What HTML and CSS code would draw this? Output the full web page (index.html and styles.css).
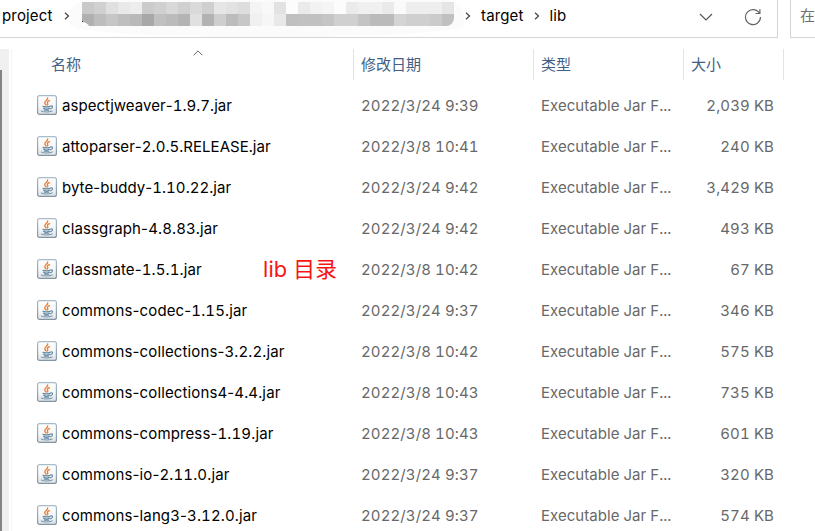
FILE: index.html
```
<!DOCTYPE html>
<html lang="zh-CN">
<head>
<meta charset="utf-8">
<title>lib</title>
<link rel="stylesheet" href="styles.css">
</head>
<body>
<svg class="defs" width="0" height="0" aria-hidden="true">
  <defs>
    <linearGradient id="tile" x1="0" y1="0" x2="0" y2="1"><stop offset="0" stop-color="#fff"/><stop offset=".55" stop-color="#f6f7f8"/><stop offset="1" stop-color="#dce1e5"/></linearGradient>
    <linearGradient id="edge" x1="0" y1="0" x2="0" y2="1"><stop offset="0" stop-color="#a9bac8"/><stop offset="1" stop-color="#8394a3"/></linearGradient>
    <symbol id="jar" viewBox="0 0 20 20">
      <rect x=".6" y=".6" width="18.8" height="18.8" rx="2" fill="url(#tile)" stroke="url(#edge)" stroke-width="1.2"/>
      <g fill="none" stroke-linecap="round">
        <path d="M10.7 3C11.1 5.3 7.2 5.9 7.8 8.1C8 9 9 9.4 9 10.1M12.6 5.6C10.8 6.2 9.8 7.2 10.6 8.3C11 9 10.8 9.6 10.2 10" stroke="#ec8038" stroke-width="1.35"/>
        <path d="M6 11.4C7.6 12.1 11.6 12 13 11.4M6.5 13.3C8 14 11 14 12.3 13.3M7.3 15.1H11.8M13.5 11C16.6 10.4 15.8 13.3 13.3 13.8" stroke="#668ba5" stroke-width="1.15"/>
        <path d="M4.3 16.1C6.4 17.4 13 17.3 15.3 16" stroke="#7292a8" stroke-width="1"/>
      </g>
    </symbol>
  </defs>
</svg>
<header class="top">
  <div class="address">
    <span class="crumb project">project</span>
    <svg class="sep" viewBox="0 0 6 8"><path d="M1 .8L4.5 4L1 7.2"/></svg>
    <div class="redacted"><div class="mosaic" id="mosaic"></div></div>
    <svg class="sep second" viewBox="0 0 6 8"><path d="M1 .8L4.5 4L1 7.2"/></svg>
    <span class="crumb target">target</span>
    <svg class="sep third" viewBox="0 0 6 8"><path d="M1 .8L4.5 4L1 7.2"/></svg>
    <span class="crumb lib">lib</span>
    <svg class="drop" viewBox="0 0 14 8"><path d="M1 1L7 7L13 1"/></svg>
    <svg class="reload" viewBox="0 0 18 18"><path d="M15.7 5.7A7.5 7.5 0 1 0 16.5 9M15.9 1.3V5.5H11.6"/></svg>
  </div>
  <div class="search">在</div>
</header>
<main class="content">
  <aside class="gutter"><div class="thumb"></div></aside>
  <section class="files">
    <div class="row head">
      <div class="cell">名称<svg class="sort" viewBox="0 0 10 6"><path d="M.7 5.2L5 .9L9.3 5.2"/></svg></div>
      <div class="cell">修改日期</div>
      <div class="cell">类型</div>
      <div class="cell">大小</div>
    </div>
    <div id="rows"></div>
  </section>
</main>
<script src="script.js"></script>
</body>
</html>
```
FILE: styles.css
```
* { box-sizing: border-box; }
body { margin: 0; width: 815px; height: 531px; overflow: hidden; background: #fff; color: #000; font: 15px/20px Inter, "Noto Sans CJK SC", sans-serif; font-variant-numeric: tabular-nums; }
svg { display: block; flex: none; fill: none; }
.defs { position: absolute; }
.top { display: flex; height: 38px; justify-content: space-between; }
.address { display: flex; width: 778px; height: 38px; padding: 0 0 6px 2px; align-items: center; border: solid #d5d5d5; border-width: 0 1px 1px 0; }
.crumb { white-space: nowrap; flex: none; letter-spacing: .15px; }
.project { width: 52px; }
.target { width: 43px; margin-left: 10px; }
.lib { width: 18px; margin-left: 10px; }
.sep { width: 6px; height: 8px; margin-left: 9.5px; stroke: #444; stroke-width: 1.2; }
.second { margin-left: 1px; }
.redacted { width: 394.5px; height: 37px; margin: 5px 0 0 0; padding: 2px 10px 0 12.5px; background: #fbfbfb; border-radius: 20px 20px 48% 48% / 15px 15px 12px 12px; }
.mosaic { position: relative; display: grid; width: 372px; height: 24px; grid-template-columns: repeat(31, 12px); grid-template-rows: 12px 12px; overflow: hidden; border-radius: 0 0 8px 0; }
.mosaic::after { content: ""; position: absolute; left: -8px; bottom: -12px; width: 16px; height: 16px; border-radius: 50%; background: #fdfdfd; }
.mosaic::before { content: ""; position: absolute; left: 0; bottom: 4px; width: 1px; height: 1px; background: #333; z-index: 1; }
.drop { width: 14px; height: 8px; margin: 2px 0 0 131px; stroke: #555; stroke-width: 1.2; }
.reload { width: 18px; height: 18px; margin: 2px 0 0 31px; stroke: #666; stroke-width: 1.2; }
.search { width: 25px; height: 38px; padding: 6px 0 0 9px; overflow: hidden; color: #707070; border: solid #d5d5d5; border-width: 0 0 1px 1px; }
.content { display: flex; padding-top: 11px; height: 493px; }
.gutter { width: 9px; height: 482px; padding-top: 21px; background: #f0f0f0; }
.thumb { width: 2px; height: 461px; background: #858585; }
.files { width: 773px; margin-left: 2px; border-left: 1px solid #f5f5f5; }
.row { display: grid; grid-template-columns: 342px 180px 150px 100px; height: 41px; align-items: center; color: #686868; }
.head { height: 31px; margin-bottom: 5px; color: #426084; }
.head .cell { position: relative; height: 31px; padding: 6px 0 0 7px; border-right: 1px solid #e3e3e3; }
.head .cell:first-child { padding-left: 39px; }
.sort { position: absolute; left: 181px; top: 1px; width: 10px; height: 6px; stroke: #666; }
.name { position: relative; display: flex; align-items: center; padding-left: 25px; gap: 5px; color: #000; letter-spacing: .04px; }
.name.wide { letter-spacing: .13px; }
.name svg { width: 20px; height: 20px; margin-top: -1px; }
.dash { font-variant-numeric: normal; }
.date { padding-left: 7px; letter-spacing: .1px; }
.type { padding-left: 7px; letter-spacing: .04px; }
.size { text-align: right; padding-right: 10px; letter-spacing: .1px; }
.note { position: absolute; left: 251px; top: -4px; white-space: nowrap; color: #f81414; font-size: 21.8px; line-height: 26px; }
```
FILE: script.js
```
const shades = [
  "c9 d0 e0 e9 ed cb d0 d8 d0 d9 cf e6 e2 dd f4 f8 e2 fc ea f2 f5 fc eb f0 f0 ea fa ee ee ee e5",
  "b0 bd c6 be b9 a8 c0 bb b4 e0 b2 ce bc c7 f0 f6 e8 c0 c1 c1 c5 d0 d0 c4 bb bb d4 cf cf cb c0"
].join(" ").split(" ");
document.getElementById("mosaic").innerHTML = shades.map(s => `<i style="background:#${s}${s}${s}"></i>`).join("");

const files = [
  ["aspectjweaver-1.9.7.jar", "2022/3/24 9:39", "2,039 KB"],
  ["attoparser-2.0.5.RELEASE.jar", "2022/3/8 10:41", "240 KB"],
  ["byte-buddy-1.10.22.jar", "2022/3/24 9:42", "3,429 KB"],
  ["classgraph-4.8.83.jar", "2022/3/24 9:42", "493 KB"],
  ["classmate-1.5.1.jar", "2022/3/8 10:42", "67 KB", "lib 目录"],
  ["commons-codec-1.15.jar", "2022/3/24 9:37", "346 KB"],
  ["commons-collections-3.2.2.jar", "2022/3/8 10:42", "575 KB"],
  ["commons-collections4-4.4.jar", "2022/3/8 10:43", "735 KB"],
  ["commons-compress-1.19.jar", "2022/3/8 10:43", "601 KB"],
  ["commons-io-2.11.0.jar", "2022/3/24 9:37", "320 KB"],
  ["commons-lang3-3.12.0.jar", "2022/3/24 9:37", "574 KB"]
];
const label = name => name.replace(/-/g, '<span class="dash">-</span>');
document.getElementById("rows").innerHTML = files.map(([name, date, size, note]) =>
  `<div class="row"><div class="name${/^c/.test(name) ? " wide" : ""}"><svg><use href="#jar"/></svg><span>${label(name)}</span>${note ? `<span class="note">${note}</span>` : ""}</div><div class="date">${date}</div><div class="type">Executable Jar F...</div><div class="size">${size}</div></div>`).join("");
```
